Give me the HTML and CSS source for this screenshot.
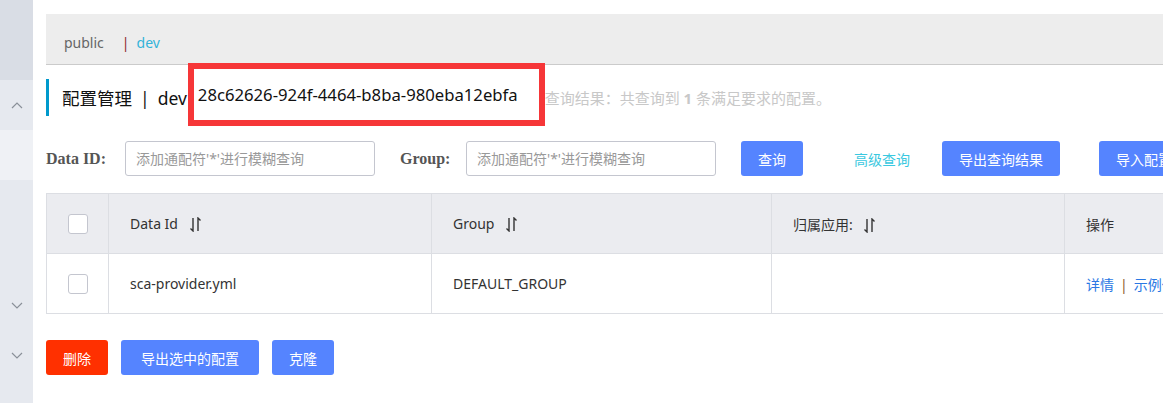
FILE: index.html
```html
<!DOCTYPE html>
<html lang="zh-CN">

<head>
    <meta charset="UTF-8">
    <title>配置管理</title>
    <link rel="stylesheet" href="styles.css">
</head>

<body>
    <div class="layout">
        <!-- Side menu -->
        <aside class="sidebar">
            <div class="sb-top"></div>
            <div class="sb-item">
                <svg width="12" height="7" viewBox="0 0 12 7"><polyline points="1,6 6,1 11,6" /></svg>
            </div>
            <div class="sb-item active"></div>
            <div class="sb-gap"></div>
            <div class="sb-item">
                <svg width="12" height="7" viewBox="0 0 12 7"><polyline points="1,1 6,6 11,1" /></svg>
            </div>
            <div class="sb-item">
                <svg width="12" height="7" viewBox="0 0 12 7"><polyline points="1,1 6,6 11,1" /></svg>
            </div>
        </aside>

        <main class="content">
            <!-- Namespace tabs -->
            <div class="crumbs">
                <span class="ns">public</span><span class="ns-sep">|</span><span class="ns current">dev</span>
            </div>

            <!-- Title -->
            <div class="page-title">
                <span class="title-text">配置管理<span class="title-sep">|</span>dev</span>
                <span class="ns-id">28c62626-924f-4464-b8ba-980eba12ebfa</span>
                <span class="result">查询结果：共查询到 <b>1</b> 条满足要求的配置。</span>
            </div>

            <!-- Search -->
            <div class="search-bar">
                <label class="field-label">Data ID:</label>
                <input class="field" type="text" placeholder="添加通配符'*'进行模糊查询">
                <label class="field-label group-label">Group:</label>
                <input class="field" type="text" placeholder="添加通配符'*'进行模糊查询">
                <button class="btn primary btn-query">查询</button>
                <a class="link-adv" href="#">高级查询</a>
                <button class="btn primary btn-export">导出查询结果</button>
                <button class="btn primary btn-import">导入配置</button>
            </div>

            <!-- Config table -->
            <table class="config-table">
                <thead>
                    <tr>
                        <th class="col-check"><span class="checkbox"></span></th>
                        <th class="col-id">Data Id <svg class="sort" width="11" height="15" viewBox="0 0 11 15"><path d="M3 1V14L0.5 11.5M8 14V1L10.5 3.5" /></svg></th>
                        <th class="col-group">Group <svg class="sort" width="11" height="15" viewBox="0 0 11 15"><path d="M3 1V14L0.5 11.5M8 14V1L10.5 3.5" /></svg></th>
                        <th class="col-app">归属应用: <svg class="sort" width="11" height="15" viewBox="0 0 11 15"><path d="M3 1V14L0.5 11.5M8 14V1L10.5 3.5" /></svg></th>
                        <th class="col-op">操作</th>
                    </tr>
                </thead>
                <tbody>
                    <tr>
                        <td class="col-check"><span class="checkbox"></span></td>
                        <td>sca-provider.yml</td>
                        <td>DEFAULT_GROUP</td>
                        <td></td>
                        <td><a href="#">详情</a><span class="op-sep">|</span><a href="#">示例代码</a></td>
                    </tr>
                </tbody>
            </table>

            <!-- Batch actions -->
            <div class="batch">
                <button class="btn danger">删除</button>
                <button class="btn primary btn-wide">导出选中的配置</button>
                <button class="btn primary">克隆</button>
            </div>
        </main>
    </div>
</body>

</html>
```

FILE: styles.css
```css
/* General */
body {
    margin: 0;
    font-family: "Noto Sans", "Noto Sans CJK SC", sans-serif;
    font-size: 14px;
    color: #333;
    background: #fff;
    overflow: hidden;
}

.layout {
    display: flex;
    height: 403px;
}

/* Sidebar */
.sidebar {
    width: 33px;
    flex-shrink: 0;
    display: flex;
    flex-direction: column;
    background-color: #e6e9ef;
}

.sb-top {
    height: 80px;
    background-color: #d9dde5;
}

.sb-item {
    height: 50px;
    display: flex;
    align-items: center;
    justify-content: center;
}

.sb-item.active {
    background-color: #eff1f5;
}

.sb-gap {
    height: 100px;
}

.sidebar svg polyline {
    fill: none;
    stroke: #8a9099;
    stroke-width: 1.2;
}

/* Content */
.content {
    flex: 1;
    min-width: 0;
    padding: 14px 0 0 13px;
    overflow: hidden;
}

.crumbs {
    height: 51px;
    box-sizing: border-box;
    padding: 14px 18px 0;
    line-height: 30px;
    background-color: #ededed;
    border-bottom: 1px solid #cbcbcb;
}

.ns {
    color: #666;
}

.ns-sep {
    color: #8e2a2a;
    margin: 0 7px 0 18px;
}

.ns.current {
    color: #33b3d9;
}

/* Title */
.page-title {
    display: flex;
    align-items: center;
    height: 37px;
    margin-top: 14px;
    padding-left: 13px;
    border-left: 3px solid #0099cc;
    white-space: nowrap;
}

.title-text {
    font-size: 17.5px;
    color: #111;
}

.title-sep {
    margin: 0 8px;
}

/* red annotation frame drawn over the namespace id */
.ns-id {
    position: relative;
    z-index: 1;
    flex-shrink: 0;
    height: 51px;
    font-size: 16.7px;
    color: #111;
    line-height: 51px;
    padding: 0 21px 0 4px;
    border: 6px solid #f63638;
    margin: 0 0 6px 1px;
    background: #fff;
}

.result {
    font-size: 15px;
    color: #c8c8c8;
}

/* Search */
.search-bar {
    display: flex;
    align-items: center;
    height: 35px;
    margin-top: 25px;
    white-space: nowrap;
}

.search-bar > * {
    flex-shrink: 0;
}

.field-label {
    font-family: "Liberation Serif", serif;
    font-weight: bold;
    font-size: 16px;
    color: #555;
    width: 79px;
}

.group-label {
    margin-left: 25px;
    width: 66px;
}

.field {
    width: 250px;
    height: 35px;
    box-sizing: border-box;
    padding: 0 10px;
    border: 1px solid #c4c6cf;
    border-radius: 3px;
    font-family: inherit;
    font-size: 14px;
}

.field::placeholder {
    color: #999;
}

.btn {
    height: 35px;
    padding: 0 17px;
    border: none;
    border-radius: 3px;
    font-family: inherit;
    font-size: 14px;
    color: #fff;
    cursor: pointer;
    flex-shrink: 0;
}

.btn.primary {
    background-color: #5584ff;
}

.btn.danger {
    background-color: #ff3000;
}

.btn-query {
    margin-left: 25px;
}

.link-adv {
    margin-left: 51px;
    color: #3ac8e0;
    text-decoration: none;
}

.btn-export {
    margin-left: 32px;
}

.btn-import {
    margin-left: 39px;
}

/* Table */
.config-table {
    margin-top: 17px;
    width: 1230px;
    border-collapse: collapse;
    table-layout: fixed;
}

.config-table th,
.config-table td {
    box-sizing: border-box;
    height: 60px;
    padding: 0 0 0 21px;
    border: 1px solid #dcdee3;
    text-align: left;
    font-weight: normal;
    color: #333;
    white-space: nowrap;
    overflow: hidden;
}

.config-table th {
    background-color: #ebecf0;
}

.config-table .col-check {
    width: 62px;
    padding: 0;
    text-align: center;
}

.col-id {
    width: 323px;
}

.col-group {
    width: 340px;
}

.col-app {
    width: 293px;
}

.checkbox {
    display: inline-block;
    width: 18px;
    height: 18px;
    vertical-align: middle;
    border: 1px solid #c4c6cf;
    border-radius: 3px;
    background: #fff;
}

.sort {
    vertical-align: -3px;
    margin-left: 8px;
}

.sort path {
    fill: none;
    stroke: #333;
    stroke-width: 1.4;
}

.config-table td a {
    color: #2a78e4;
    text-decoration: none;
}

.op-sep {
    color: #8b5a2b;
    margin: 0 6px;
}

/* Batch actions */
.batch {
    display: flex;
    gap: 13px;
    margin-top: 26px;
}

.btn-wide {
    padding: 0 20px;
}
```
